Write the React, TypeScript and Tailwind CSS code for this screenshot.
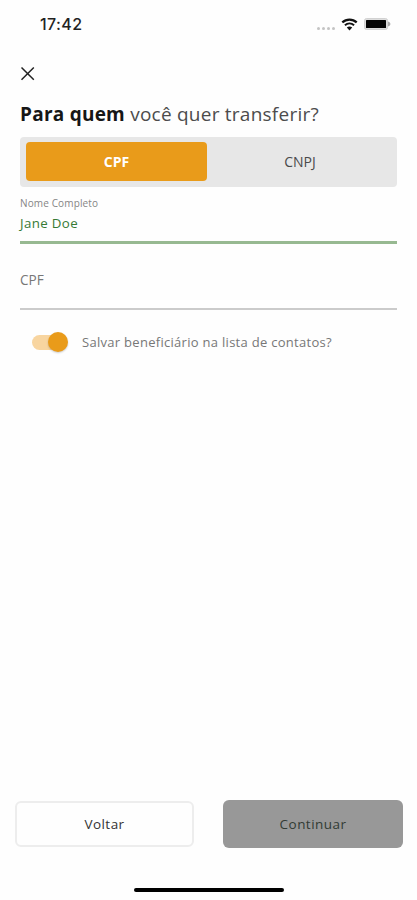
import React, { useState } from 'react';

type DocType = 'CPF' | 'CNPJ';

const StatusBar: React.FC = () => (
  <div className="h-12 pl-10 pr-[26px] flex items-center justify-between">
    <span className="font-['Inter','Liberation_Sans',sans-serif] text-[16px] font-medium leading-none tracking-[0.4px] text-[#222]">17:42</span>
    <div className="flex items-center">
      <div className="flex gap-[2px] mt-[9px] mr-[6px]">
        <span className="w-[3px] h-[3px] rounded-full bg-[#c4c4c4]" />
        <span className="w-[3px] h-[3px] rounded-full bg-[#c4c4c4]" />
        <span className="w-[3px] h-[3px] rounded-full bg-[#c4c4c4]" />
        <span className="w-[3px] h-[3px] rounded-full bg-[#c4c4c4]" />
      </div>
      <svg width="17" height="13" viewBox="0 0 17 13" className="mr-[6px]">
        <path d="M1.3 4.4C5.3 0.6 11.7 0.6 15.7 4.4" fill="none" stroke="#111" strokeWidth="2.2" />
        <path d="M3.9 7.3C6.6 4.9 10.4 4.9 13.1 7.3" fill="none" stroke="#111" strokeWidth="1.9" />
        <path d="M5.8 9.6C7.3 8.2 9.7 8.2 11.2 9.6L8.5 12.4Z" fill="#111" />
      </svg>
      <svg width="27" height="12" viewBox="0 0 27 12">
        <rect x="0.5" y="0.5" width="23" height="11" rx="2" fill="#ddd" stroke="#d2d2d2" />
        <rect x="2" y="2" width="20" height="8" rx="0.5" fill="#050505" />
        <path d="M24 3.5V8.5C27.2 7.5 27.2 4.5 24 3.5Z" fill="#aaa" />
      </svg>
    </div>
  </div>
);

const App: React.FC = () => {
  const [docType, setDocType] = useState<DocType>('CPF');
  const [name, setName] = useState('Jane Doe');
  const [doc, setDoc] = useState('');
  const [saveContact, setSaveContact] = useState(true);

  const tabClass = (type: DocType) =>
    docType === type
      ? 'rounded-[4px] bg-[#e99b1a] text-white font-bold'
      : 'rounded-[4px] text-[#4a4a4a] font-medium';

  return (
    <div className="w-full h-[900px] bg-[#fefefe] flex flex-col font-['Open_Sans','Noto_Sans',sans-serif]">
      <StatusBar />

      <main className="flex-1 px-5 flex flex-col">
        <button className="w-[15px] h-[15px] mt-[18px]" aria-label="Fechar">
          <svg width="15" height="15" viewBox="0 0 15 15" fill="none" stroke="#222" strokeWidth="1.5">
            <path d="M1.5 1.5L13.8 13.8M13.8 1.5L1.5 13.8" />
          </svg>
        </button>

        <h1 className="mt-[19px] h-7 leading-7 text-[19px] tracking-[0.24px] whitespace-nowrap text-[#4c4c4c]">
          <strong className="font-bold text-[#161616]">Para quem</strong> você quer transferir?
        </h1>

        <div className="mt-[9px] h-[50px] p-[6px] pt-[5px] pr-1 grid grid-cols-[181px_1fr] rounded-[4px] bg-[#e7e7e7] text-[14px]">
          <button className={tabClass('CPF')} onClick={() => setDocType('CPF')}>CPF</button>
          <button className={tabClass('CNPJ')} onClick={() => setDocType('CNPJ')}>CNPJ</button>
        </div>

        {/* Form fields */}
        <label className="mt-[9px] h-[48px] flex flex-col border-b-[3px] border-[#97b991]">
          <span className="h-[15px] leading-[15px] text-[10px] tracking-[0.13px] text-[#858585]">Nome Completo</span>
          <input
            className="mt-[2px] -ml-1 indent-1 h-5 text-[13.3px] leading-5 tracking-[0.35px] font-medium text-[#367a34] outline-none"
            value={name}
            onChange={e => setName(e.target.value)}
          />
        </label>

        <label className="mt-[26px] h-10 border-b-2 border-[#cbcbcb]">
          <input
            className="h-5 w-full block text-[13.6px] leading-5 text-[#777] placeholder:text-[#777] outline-none"
            placeholder={docType}
            value={doc}
            onChange={e => setDoc(e.target.value)}
          />
        </label>

        <div className="mt-[22px] pl-3 flex items-center">
          <button
            role="switch"
            aria-checked={saveContact}
            className={`w-9 h-5 flex items-center ${saveContact ? 'justify-end' : 'justify-start'}`}
            onClick={() => setSaveContact(!saveContact)}
          >
            <span className="w-[26px] h-[15px] -mr-[10px] rounded-full bg-[#f8d5a0]" />
            <span className="w-5 h-5 rounded-full bg-[#e99b1a] relative shadow-[0_1px_2px_#0003]" />
          </button>
          <span className="ml-[14px] text-[13px] leading-5 tracking-[0.29px] whitespace-nowrap text-[#777]">
            Salvar beneficiário na lista de contatos?
          </span>
        </div>
      </main>

      <footer className="pl-[15px] pr-[14px]">
        <div className="h-12 flex justify-between text-[13.5px] tracking-[0.45px] font-medium">
          <button className="w-[179px] my-[1px] rounded-[6px] border-2 border-[#ededed] text-[#333]">Voltar</button>
          <button className="w-[180px] rounded-[6px] bg-[#989898] text-[#323b34]">Continuar</button>
        </div>
        <div className="w-[150px] h-1 mt-10 mb-2 mx-auto rounded-full bg-black" />
      </footer>
    </div>
  );
};

export default App;
